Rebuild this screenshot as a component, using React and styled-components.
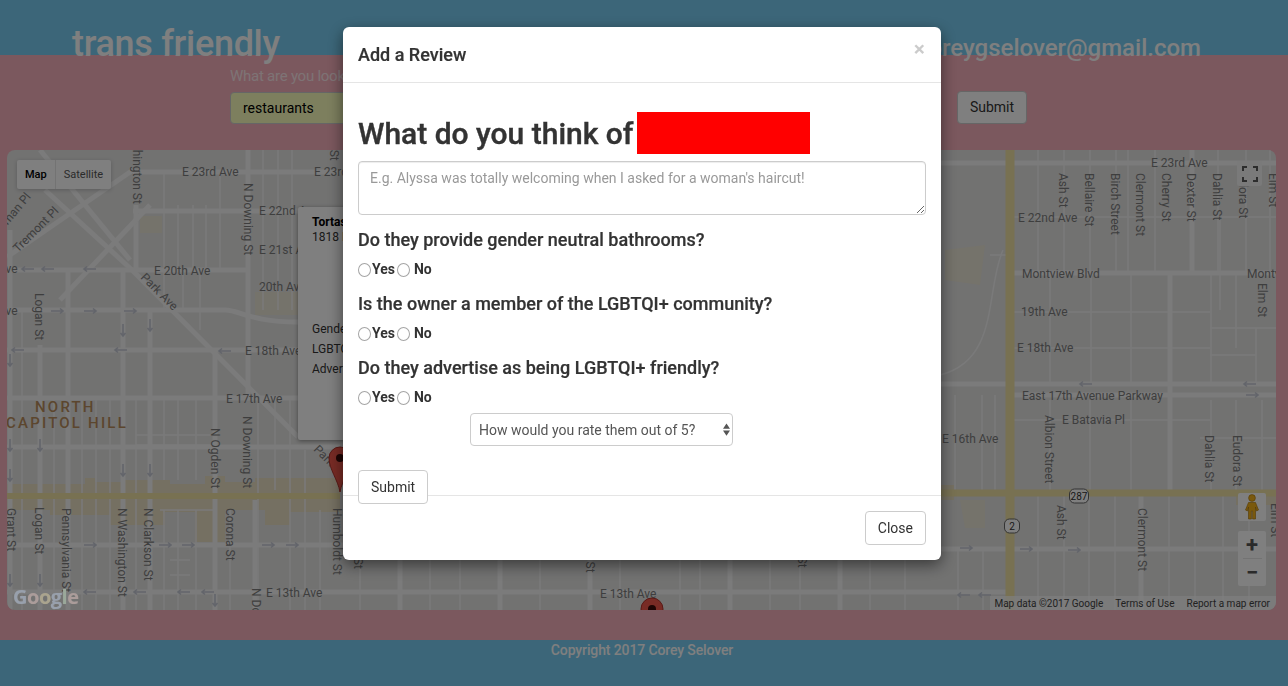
import React from 'react'
import styled, { createGlobalStyle } from 'styled-components'

const GlobalStyle = createGlobalStyle`
  * { box-sizing: border-box; }
  body {
    margin: 0;
    font-family: Roboto, "Liberation Sans", sans-serif;
    overflow: hidden;
  }
`

const questions = [
  'Do they provide gender neutral bathrooms?',
  'Is the owner a member of the LGBTQI+ community?',
  'Do they advertise as being LGBTQI+ friendly?',
]

// map data, all in page coordinates (the svg viewBox starts at 7,150)
const bigRoads = [
  'M133 172H345', 'M940 163H1008', 'M1008 163H1276', 'M7 270H250', 'M7 310H225C240 310 250 322 298 322', 'M7 350H298',
  'M7 398H298', 'M7 447H340', 'M7 545H345', 'M7 592H1010', 'M940 549H1276', 'M1012 273H1276', 'M940 384H1276',
  'M1012 395H1276', 'M248 150V400', 'M40 345V610', 'M68 270V610', 'M123 270V610', 'M150 310V610', 'M215 350V610',
  'M255 500V610', 'M10 230V610', 'M1192 150V273', 'M1170 273V495', 'M1141 495V610', 'M136 205V270', 'M133 211H298',
  'M132 270L298 437', 'M45 190L132 270', 'M7 257L133 170', 'M60 300L150 205', 'M40 150L130 260', 'M590 560V610',
  'M400 560V610', 'M500 560V610', 'M730 560V610', 'M840 560V610',
]

const thinRoads = [
  'M164 172V270', 'M178 205V270', 'M193 205V270', 'M206 205V270', 'M220 172V270', 'M263 150V310', 'M278 150V310',
  'M292 150V310', 'M164 270V310', 'M183 270V310', 'M200 270V330', 'M258 400V610', 'M275 400V490', 'M290 400V610',
  'M305 450V610', 'M320 510V610', 'M22 310V610', 'M54 400V610', 'M82 400V610', 'M96 400V610', 'M110 400V610',
  'M136 400V610', 'M164 400V480', 'M178 400V480', 'M196 400V480', 'M164 510V610', 'M178 510V610', 'M196 510V610',
  'M230 510V610', 'M136 445H215', 'M136 435H215', 'M160 510H215', 'M170 560H190', 'M170 575H190',
  'M1038 150V273', 'M1064 150V273', 'M1090 150V273', 'M1116 150V273', 'M1128 150V273', 'M1155 150V273', 'M1218 150V273',
  'M1220 217V310', 'M1246 150V273', 'M1270 150V273', 'M1012 217H1276', 'M1012 312H1210', 'M1012 348H1210',
  'M1012 420H1210', 'M1200 438H1276', 'M1050 273V384', 'M1091 273V384', 'M1131 273V384', 'M1211 273V384',
  'M1236 273V348', 'M1210 328H1276', 'M1210 355H1256', 'M1256 328V384', 'M1038 495V610', 'M1064 495V610',
  'M1089 495V610', 'M1115 495V610', 'M1169 495V610', 'M1195 495V610', 'M1223 495V610', 'M1249 495V610',
  'M1050 400V495', 'M1090 400V495', 'M1131 400V495', 'M1211 400V495', 'M1236 400V495', 'M1262 400V495',
  'M955 395V495', 'M982 395V495', 'M995 395V495', 'M958 550V610', 'M983 550V610', 'M360 560V610', 'M430 560V610',
  'M460 560V610', 'M540 560V610', 'M620 560V610', 'M680 560V610', 'M700 560V610', 'M770 560V610', 'M800 560V610',
  'M870 560V610', 'M905 560V610', 'M1012 255H990', 'M1003 250C985 290 1000 360 940 375',
]

const arrows = [
  [28, 269, -1], [48, 269, -1], [90, 269, -1], [57, 311, 1], [90, 311, 1], [130, 311, 1], [18, 350, -1], [121, 350, -1],
  [225, 351, -1], [90, 545, 1], [165, 545, 1], [188, 545, 1], [268, 545, 1], [292, 545, 1], [90, 592, -1], [140, 592, -1],
  [184, 592, -1], [208, 592, -1], [966, 548, 1], [1026, 549, 1], [1074, 550, 1], [1086, 384, -1], [1250, 384, -1],
  [1252, 395, 1], [964, 595, -1], [985, 595, -1],
]

const labels = [
  ['E 23rd Ave', 182, 176], ['E 23rd Ave', 314, 176], ['E 22nd Ave', 259, 215], ['E 21st Ave', 259, 254],
  ['20th Ave', 259, 291], ['E 20th Ave', 154, 275], ['E 18th Ave', 245, 355], ['E 17th Ave', 226, 403],
  ['Ave', -2, 273], ['Ave', -2, 315], ['Park Ave', 140, 278, 45], ['Park Ave', 313, 450, 45],
  ['N Downing St', 244, 183, 90], ['N Washington St', 133, 115, 90], ['Ogden St', 330, 112, 90],
  ['Tremont Pl', 18, 253, -45], ['Sherman Pl', -8, 244, -50], ['Logan St', 35, 293, 90], ['Logan St', 35, 507, 90],
  ['N Ogden St', 211, 428, 90], ['N Downing St', 243, 416, 90], ['Grant St', 7, 508, 90], ['Pennsylvania St', 62, 508, 90],
  ['N Washington St', 118, 508, 90], ['N Clarkson St', 144, 508, 90], ['Corona St', 226, 508, 90],
  ['Humboldt St', 333, 508, 90], ['N Downing St', 252, 588, 90], ['E 13th Ave', 266, 597], ['E 13th Ave', 600, 598],
  ['Race St', 586, 532, 90], ['High St', 354, 530, 90], ['Vine St', 798, 530, 90],
  ['E 23rd Ave', 1151, 167], ['E 22nd Ave', 1018, 222], ['Ash St', 1059, 173, 90], ['Bellaire St', 1085, 173, 90],
  ['Birch Street', 1111, 173, 90], ['Clermont St', 1136, 173, 90], ['Cherry St', 1162, 173, 90], ['Dexter St', 1187, 173, 90],
  ['Dahlia St', 1213, 173, 90], ['Eudora St', 1239, 167, 90], ['Elm St', 1269, 173, 90], ['Montview Blvd', 1022, 278],
  ['Montview', 1247, 278], ['19th Ave', 1021, 316], ['E 18th Ave', 1017, 352], ['East 17th Avenue Parkway', 1022, 400],
  ['E Batavia Pl', 1062, 424], ['E 16th Ave', 942, 443], ['Elm St', 1258, 283, 90], ['Albion Street', 1045, 415, 90],
  ['Dahlia St', 1205, 435, 90], ['Eudora St', 1233, 435, 90], ['Elm St', 1271, 503, 90], ['Ash St', 1057, 505, 90],
  ['Clermont St', 1138, 508, 90],
]

function Pin({ x, y }) {
  return (
    <g transform={`translate(${x} ${y})`}>
      <path d="M0 45C-2 33-11 22-11 11A11 11 0 0 1 11 11C11 22 2 33 0 45Z" fill="#f0574a" stroke="#b3342c" />
      <circle cy="11" r="4" fill="#3a0a08" />
    </g>
  )
}

function Shield({ x, y, text, wide }) {
  const w = wide ? 19 : 15
  return (
    <g>
      <rect x={x - w / 2} y={y - 7} width={w} height="14" rx="5" fill="#fff" stroke="#666" />
      <ShieldText x={x} y={y + 3.5} textAnchor="middle">{text}</ShieldText>
    </g>
  )
}

function MapDrawing() {
  return (
    <MapCanvas viewBox="7 150 1269 460">
      <rect x="7" y="150" width="1269" height="460" fill="#e4e4e3" />
      <g fill="#ebe6d6">
        <rect x="140" y="216" width="22" height="17" />
        <rect x="255" y="292" width="43" height="23" />
        <path d="M945 250L985 245 980 285 945 280Z" />
        <path d="M960 500H985V528H965Z" />
        <path d="M7 484H85V478H95V482H125V480H170V484H205V476H225V482H255V478H340V512H290V525H265V510H225V542H195V512H165V525H110V515H50V510H7Z" fill="#ebe0c4" />
        <path d="M940 485H954V500H940Z M1236 493H1276V505H1236Z" fill="#ebe0c4" />
      </g>
      <g stroke="#f4f4f4" fill="none" strokeWidth="1.5">
        {thinRoads.map((d) => <path key={d} d={d} />)}
      </g>
      <g stroke="#f6f6f6" fill="none" strokeWidth="5">
        {bigRoads.map((d) => <path key={d} d={d} />)}
      </g>
      <g stroke="#f0e2a4" fill="none" strokeWidth="6">
        <path d="M7 496H340" />
        <path d="M940 493H1276" strokeWidth="7" />
        <path d="M1010 150V610" strokeWidth="9" />
      </g>
      <g stroke="#c6cad6" fill="none" strokeWidth="1.6">
        {arrows.map(([x, y, dir]) => (
          <path key={`${x}-${y}`} d={`M${x - 6 * dir} ${y}H${x + 6 * dir}m${-3 * dir} -2.5l${3 * dir} 2.5l${-3 * dir} 2.5`} />
        ))}
        {[[10, 360], [10, 445], [10, 475], [10, 580], [40, 445], [40, 580], [123, 470], [123, 330], [150, 325], [150, 470], [215, 600]].map(([x, y]) => (
          <path key={`${x}-${y}`} d={`M${x} ${y - 6}V${y + 6}m-2.5 -3l2.5 3l2.5 -3`} />
        ))}
      </g>
      {labels.map(([text, x, y, angle]) => (
        <StreetLabel key={`${text}-${x}-${y}`} x={x} y={y} transform={angle ? `rotate(${angle} ${x} ${y})` : undefined}>
          {text}
        </StreetLabel>
      ))}
      <AreaLabel x="35" y="412">NORTH</AreaLabel>
      <AreaLabel x="6" y="428">CAPITOL HILL</AreaLabel>
      <Shield x={1079} y={496} text="287" wide />
      <Shield x={1012} y={526} text="2" />
      <Pin x={340} y={447} />
      <Pin x={652} y={598} />
    </MapCanvas>
  )
}

function App() {
  return (
    <Page>
      <GlobalStyle />
      <Header>
        <Brand>trans friendly</Brand>
        <Account>coreygselover@gmail.com</Account>
      </Header>
      <Main>
        <SearchForm>
          <SearchLabel>What are you looking for?</SearchLabel>
          <SearchRow>
            <SearchInput defaultValue="restaurants" />
            <SearchButton type="button">Submit</SearchButton>
          </SearchRow>
        </SearchForm>
        <MapFrame>
          <MapDrawing />
          <MapTypes>
            <MapType $active>Map</MapType>
            <MapType>Satellite</MapType>
          </MapTypes>
          <Fullscreen>
            <svg width="16" height="16" viewBox="0 0 16 16" fill="none" stroke="#5a5a5a" strokeWidth="2">
              <path d="M1 5V1H5M11 1H15V5M15 11V15H11M5 15H1V11" />
            </svg>
          </Fullscreen>
          <InfoWindow>
            <strong>Tortas Uruapan</strong>
            <span>1818 E Colfax Ave</span>
            <InfoFacts>
              <span>Gender neutral: yes</span>
              <span>LGBTQI+ owned: no</span>
              <span>Advertises: yes</span>
            </InfoFacts>
          </InfoWindow>
          <Pegman>
            <svg width="14" height="26" viewBox="0 0 14 26" fill="#f5b21a" stroke="#a87408" strokeWidth=".6">
              <circle cx="7" cy="4" r="3.4" />
              <path d="M3.5 8.5H10.5L13.5 16 11.5 17 10.5 13V25H7.6V17H6.4V25H3.5V13L2.5 17 .5 16Z" />
            </svg>
          </Pegman>
          <ZoomControl>
            <ZoomSign>+</ZoomSign>
            <ZoomDivider />
            <ZoomSign>−</ZoomSign>
          </ZoomControl>
          <GoogleMark>
            <i>G</i><b>o</b><em>o</em><i>g</i><u>l</u><b>e</b>
          </GoogleMark>
          <Attribution>
            <span>Map data ©2017 Google</span>
            <span>Terms of Use</span>
            <span>Report a map error</span>
          </Attribution>
        </MapFrame>
      </Main>
      <Footer>Copyright 2017 Corey Selover</Footer>
      <Backdrop>
        <Modal>
          <ModalHeader>
            <ModalTitle>Add a Review</ModalTitle>
            <CloseX>×</CloseX>
          </ModalHeader>
          <ModalBody>
            <Heading>
              What do you think of
              <Redacted />
            </Heading>
            <ReviewBox placeholder="E.g. Alyssa was totally welcoming when I asked for a woman's haircut!" />
            <Questions>
              {questions.map((q, i) => (
                <Question key={q}>
                  <QuestionText>{q}</QuestionText>
                  <Choices>
                    <Choice><input type="radio" name={`q${i}`} />Yes</Choice>
                    <Choice><input type="radio" name={`q${i}`} />No</Choice>
                  </Choices>
                </Question>
              ))}
            </Questions>
            <RatingWrap>
              <Rating defaultValue="">
                <option value="">How would you rate them out of 5?</option>
              </Rating>
              <RatingArrows width="7" height="15" viewBox="0 0 8 16" fill="#555">
                <path d="M4 1L8 7H0ZM4 15L0 9H8Z" />
              </RatingArrows>
            </RatingWrap>
            <PlainButton type="button">Submit</PlainButton>
          </ModalBody>
          <ModalFooter>
            <PlainButton type="button">Close</PlainButton>
          </ModalFooter>
        </Modal>
      </Backdrop>
    </Page>
  )
}

const Page = styled.div`
  height: 100vh;
  display: flex;
  flex-direction: column;
  background: #78cdf2;
  color: #fff;
`

const Header = styled.header`
  position: relative;
  z-index: 1;
  height: 55px;
  flex: none;
  display: flex;
  justify-content: space-between;
  align-items: flex-start;
  padding: 0 87px 0 72px;
`

const Brand = styled.div`
  margin-top: 23px;
  font-size: 36px;
  line-height: 42px;
  font-weight: 500;
  letter-spacing: -0.3px;
`

const Account = styled.div`
  margin-top: 34px;
  font-size: 24px;
  line-height: 28px;
  font-weight: 500;
`

const Main = styled.main`
  flex: 1;
  background: #f6b0bc;
  padding: 0 12px 30px 7px;
  display: flex;
  flex-direction: column;
`

const SearchForm = styled.form`
  height: 95px;
  flex: none;
  padding: 12px 0 0 223px;
`

const SearchLabel = styled.div`
  height: 25px;
  font-size: 15px;
  line-height: 18px;
  letter-spacing: -0.25px;
  color: #fff;
  opacity: 0.7;
`

const SearchRow = styled.div`
  display: flex;
  align-items: center;
  gap: 12px;
`

const SearchInput = styled.input`
  width: 701px;
  height: 32px;
  margin-right: 14px;
  padding: 0 12px;
  border: 1px solid #ccc;
  border-radius: 4px;
  background: #faffbd;
  font: 14px Roboto, sans-serif;
  color: #000;
`

const SearchButton = styled.button`
  width: 70px;
  height: 33px;
  margin-top: -2px;
  border: 1px solid #ccc;
  border-radius: 4px;
  background: #fff;
  font: 14px Roboto, sans-serif;
  color: #333;
`

const MapFrame = styled.div`
  position: relative;
  flex: 1;
  overflow: hidden;
  border-radius: 8px;
`

const MapCanvas = styled.svg`
  display: block;
  width: 100%;
  height: 100%;
`

const StreetLabel = styled.text`
  font: 12px Roboto, sans-serif;
  fill: #7d7d7d;
`

const AreaLabel = styled.text`
  font: 500 15px Roboto, sans-serif;
  letter-spacing: 2.2px;
  fill: #b98d5c;
`

const ShieldText = styled.text`
  font: 10px Roboto, sans-serif;
  fill: #333;
`

const MapTypes = styled.div`
  position: absolute;
  top: 10px;
  left: 10px;
  display: flex;
  height: 29px;
  background: #fff;
  border-radius: 2px;
  box-shadow: 0 1px 4px rgba(0, 0, 0, 0.2);
`

const MapType = styled.div`
  padding: 0 8px;
  display: flex;
  align-items: center;
  font-size: 11px;
  color: ${(p) => (p.$active ? '#000' : '#565656')};
  font-weight: ${(p) => (p.$active ? 500 : 400)};
  & + & { border-left: 1px solid #e6e6e6; }
`

const Fullscreen = styled.div`
  position: absolute;
  top: 11px;
  right: 14px;
  width: 25px;
  height: 25px;
  background: #f4f4f4;
  border-radius: 2px;
  display: flex;
  align-items: center;
  justify-content: center;
`

const InfoWindow = styled.div`
  position: absolute;
  left: 291px;
  top: 57px;
  width: 180px;
  height: 233px;
  padding: 8px 14px;
  background: #fff;
  border-radius: 2px;
  box-shadow: 0 1px 4px rgba(0, 0, 0, 0.4);
  font-size: 12px;
  line-height: 15px;
  color: #333;
  display: flex;
  flex-direction: column;
  strong { color: #000; font-weight: 700; }
`

const InfoFacts = styled.div`
  margin-top: 77px;
  display: flex;
  flex-direction: column;
  gap: 5px;
`

const Pegman = styled.div`
  position: absolute;
  top: 343px;
  right: 10px;
  width: 28px;
  height: 28px;
  background: #fff;
  border-radius: 2px;
  display: flex;
  align-items: center;
  justify-content: center;
`

const ZoomControl = styled.div`
  position: absolute;
  top: 381px;
  right: 10px;
  width: 28px;
  height: 55px;
  background: #fff;
  border-radius: 2px;
  display: flex;
  flex-direction: column;
  align-items: center;
`

const ZoomSign = styled.div`
  flex: 1;
  display: flex;
  align-items: center;
  font-size: 22px;
  font-weight: 700;
  line-height: 1;
  color: #555;
`

const ZoomDivider = styled.div`
  width: 19px;
  height: 1px;
  background: #e6e6e6;
`

/* sits above the backdrop: the logo stays brighter than the dimmed map */
const GoogleMark = styled.div`
  position: absolute;
  z-index: 3;
  left: 6px;
  bottom: 0;
  font: 700 20px "Open Sans", sans-serif;
  letter-spacing: -0.5px;
  text-shadow: 0 0 1px #8a8a8a;
  i, b, em, u { font-style: normal; text-decoration: none; font-weight: 700; }
  i { color: #98a0ac; }
  b { color: #ab9c9a; }
  em { color: #aaa48e; }
  u { color: #9aa89a; }
`

const Attribution = styled.div`
  position: absolute;
  right: 0;
  bottom: 0;
  height: 14px;
  padding: 0 6px 0 4px;
  display: flex;
  gap: 12px;
  align-items: center;
  background: rgba(255, 255, 255, 0.7);
  font-size: 10px;
  color: #444;
`

const Footer = styled.footer`
  height: 46px;
  flex: none;
  text-align: center;
  font-size: 14px;
  line-height: 20px;
  font-weight: 500;
  letter-spacing: -0.12px;
  padding-right: 4px;
  color: #fff;
`

const Backdrop = styled.div`
  position: fixed;
  inset: 0;
  z-index: 2;
  background: rgba(0, 0, 0, 0.5);
  display: flex;
  justify-content: center;
  align-items: flex-start;
  padding: 27px 4px 0 0;
`

const Modal = styled.div`
  width: 598px;
  background: #fff;
  border-radius: 6px;
  box-shadow: 0 5px 15px rgba(0, 0, 0, 0.5);
  color: #333;
`

const ModalHeader = styled.div`
  height: 56px;
  padding: 15px;
  display: flex;
  justify-content: space-between;
  align-items: flex-start;
  border-bottom: 1px solid #e5e5e5;
`

const ModalTitle = styled.h4`
  margin: 0;
  font-size: 18px;
  line-height: 26px;
  font-weight: 500;
  -webkit-text-stroke: 0.2px #333;
`

const CloseX = styled.span`
  margin: -3px 1px 0 0;
  font-size: 21px;
  line-height: 21px;
  font-weight: 700;
  color: #000;
  opacity: 0.2;
`

const ModalBody = styled.div`
  height: 412px;
  padding: 29px 15px 0;
`

const Heading = styled.h1`
  margin: 0 0 7px;
  height: 42px;
  display: flex;
  align-items: center;
  gap: 4px;
  font-size: 30px;
  font-weight: 500;
  -webkit-text-stroke: 0.4px #333;
`

const Redacted = styled.span`
  width: 173px;
  height: 42px;
  background: #f00;
`

const ReviewBox = styled.textarea`
  display: block;
  width: 100%;
  height: 54px;
  padding: 6px 11px;
  border: 1px solid #ccc;
  border-radius: 4px;
  box-shadow: inset 0 1px 1px rgba(0, 0, 0, 0.075);
  font: 14px/20px Roboto, sans-serif;
  color: #555;
  &::placeholder { color: #999; }
`

const Questions = styled.div`
  margin-top: -1px;
`

const Question = styled.section`
  margin-top: 16px;
`

const QuestionText = styled.h4`
  margin: 0 0 10px;
  font-size: 18px;
  line-height: 20px;
  font-weight: 500;
  -webkit-text-stroke: 0.2px #333;
`

const Choices = styled.div`
  display: flex;
  gap: 2px;
  height: 18px;
`

const Choice = styled.label`
  display: flex;
  align-items: center;
  gap: 1px;
  font-size: 14px;
  font-weight: 700;
  input {
    appearance: none;
    width: 13px;
    height: 14px;
    margin: 2px 0 0;
    border: 1px solid #a5a5a5;
    border-radius: 50%;
    background: #fff;
  }
  & + & { gap: 4px; }
`

const RatingWrap = styled.div`
  position: relative;
  width: 263px;
  height: 33px;
  margin: 7px 0 24px 112px;
`

const Rating = styled.select`
  appearance: none;
  width: 100%;
  height: 100%;
  padding: 0 8px;
  border: 1px solid #ccc;
  border-radius: 4px;
  background: #fff;
  font: 14px Roboto, sans-serif;
  color: #555;
`

const RatingArrows = styled.svg`
  position: absolute;
  right: 3px;
  top: 9px;
`

const PlainButton = styled.button`
  height: 34px;
  padding: 0 12px;
  border: 1px solid #ccc;
  border-radius: 4px;
  background: #fff;
  font: 14px Roboto, sans-serif;
  color: #333;
`

const ModalFooter = styled.div`
  padding: 15px;
  display: flex;
  justify-content: flex-end;
  border-top: 1px solid #e5e5e5;
`

export default App
